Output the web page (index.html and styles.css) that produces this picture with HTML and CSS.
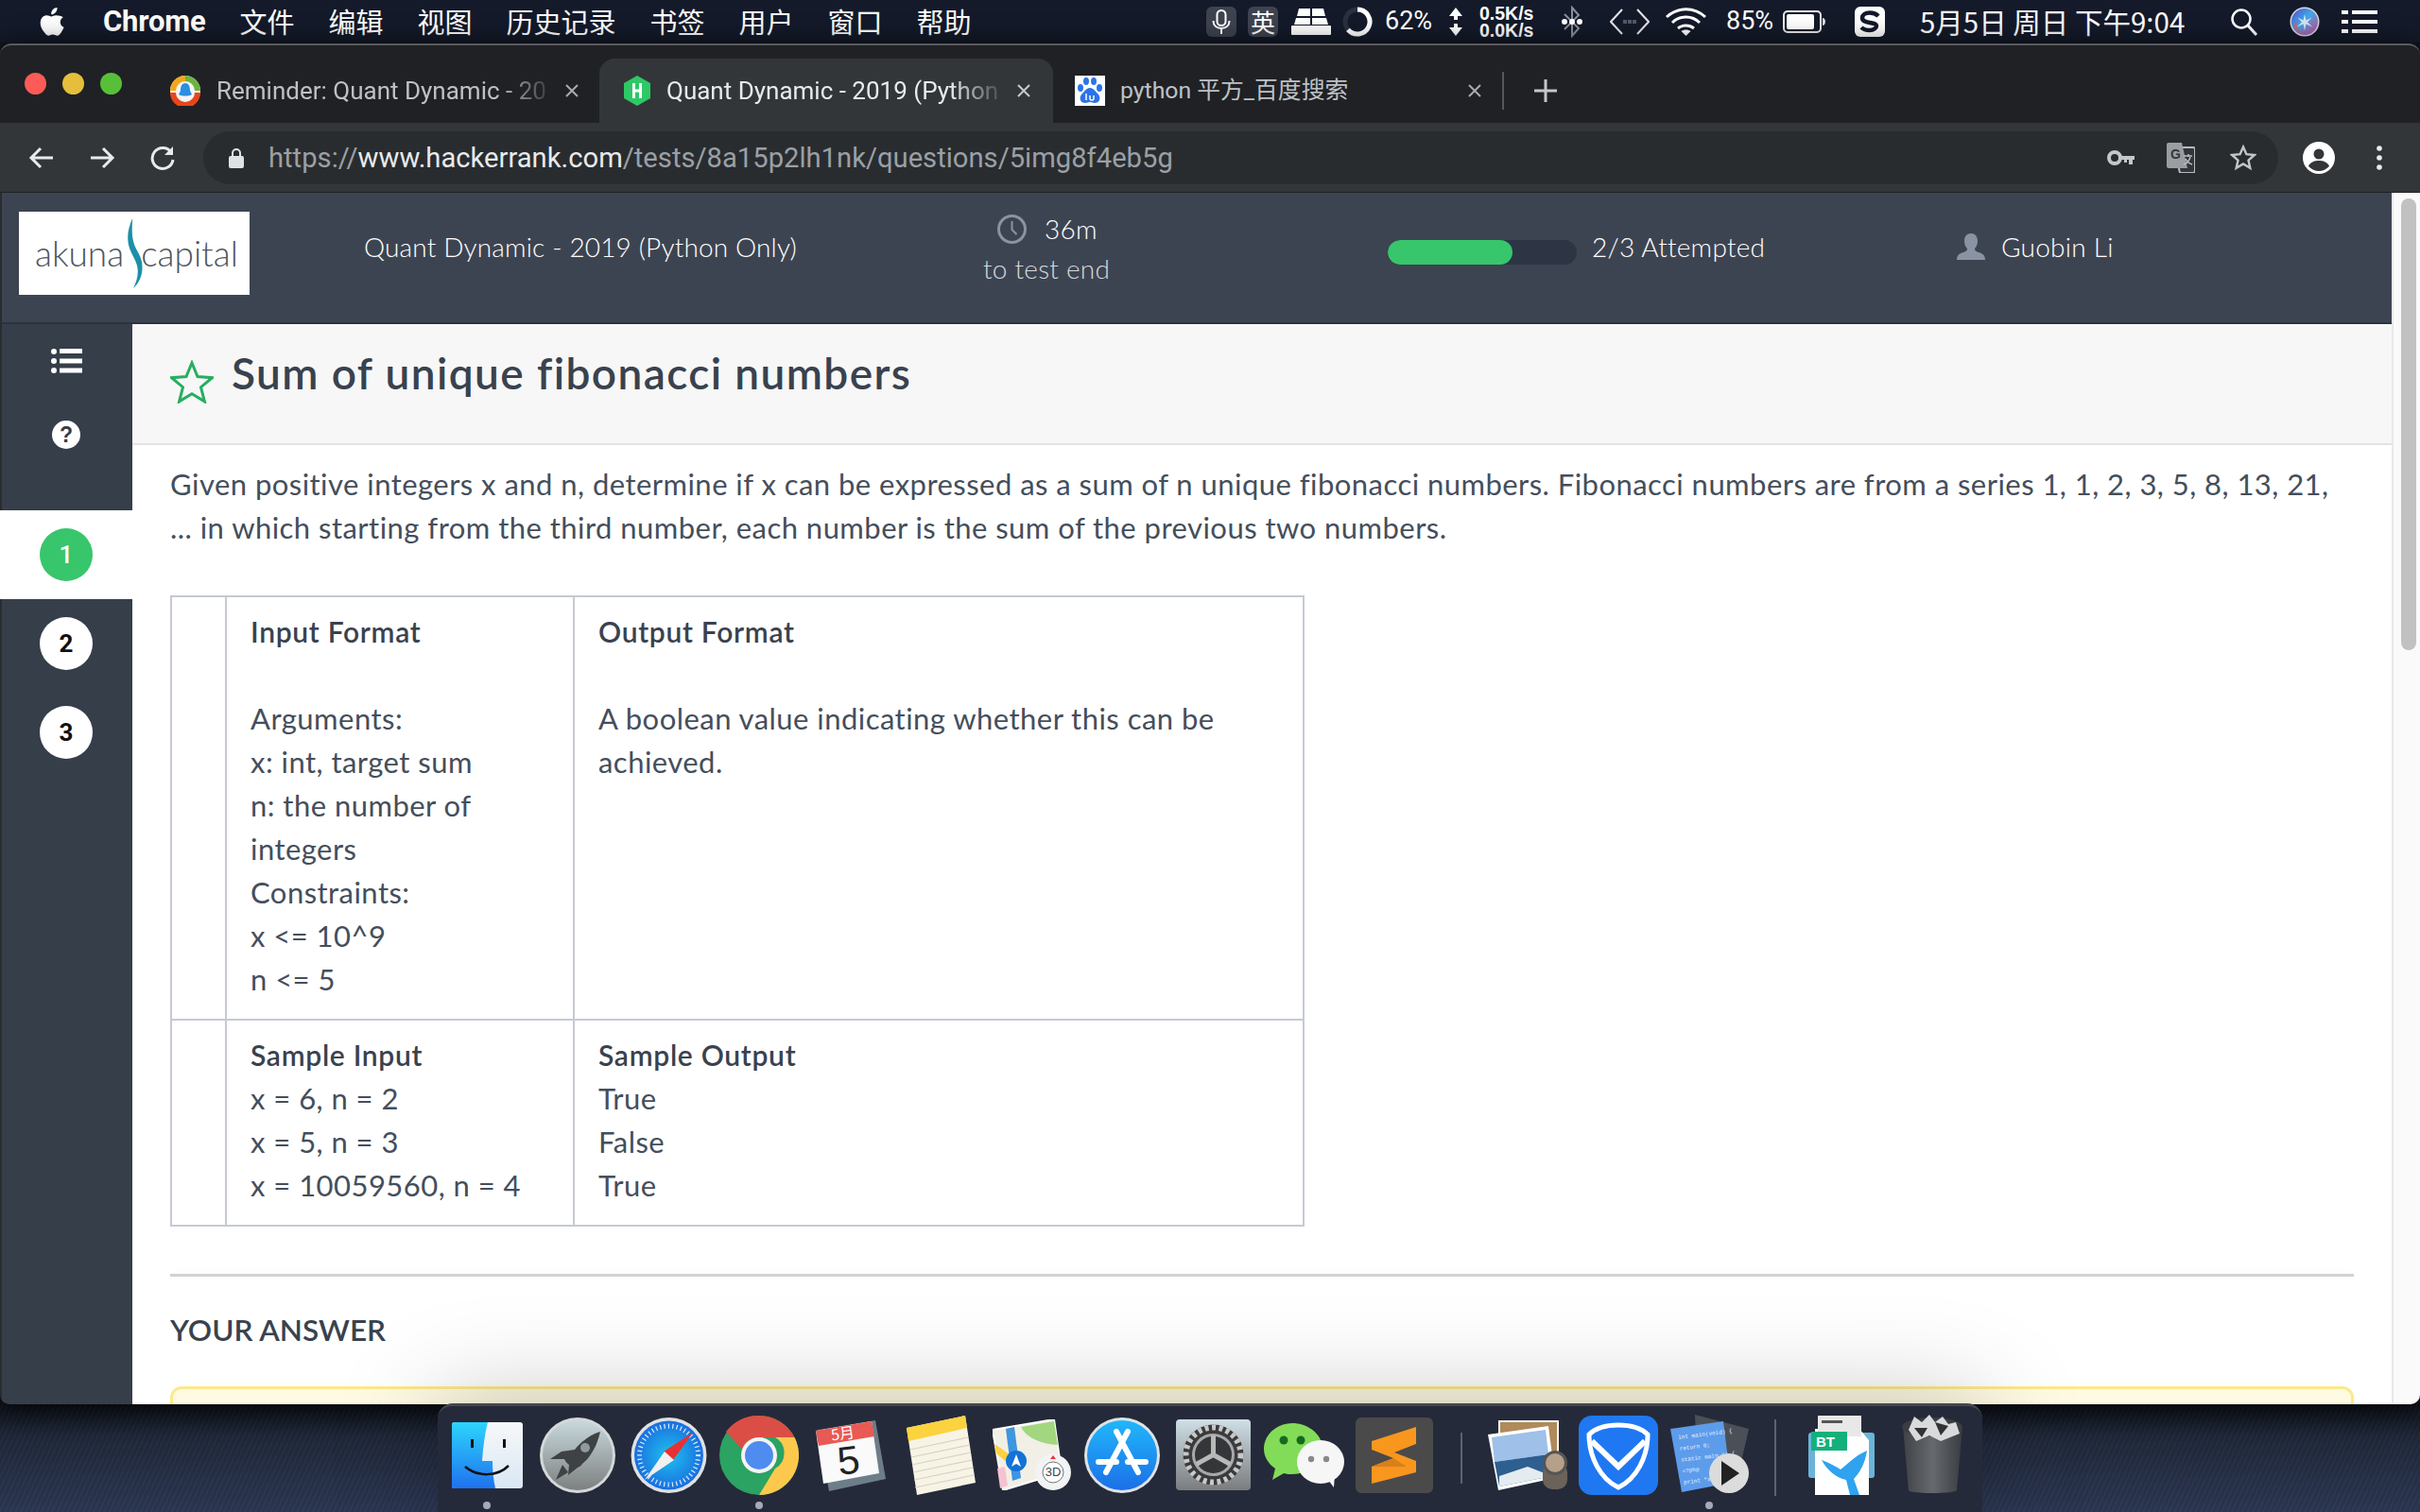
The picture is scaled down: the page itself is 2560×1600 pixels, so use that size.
FILE: index.html
```html
<!DOCTYPE html>
<html lang="en">
<head>
<meta charset="utf-8">
<title>Quant Dynamic - 2019 (Python Only)</title>
<link rel="stylesheet" href="styles.css">
</head>
<body>
<div class="desktop">
  <header class="menubar">
    <svg class="apple" viewBox="0 0 26 32"><path d="M18.5 1c.2 2.300-.7 4-1.800 5.200-1.200 1.300-2.800 2.200-4.500 2-.2-2 .7-3.900 1.800-5.100C15.200 1.800 17.100.9 18.500 1zM24.800 11.300c-2 1.300-3 3-3 5.100 0 2.500 1.400 4.300 3.800 5.300-.7 2-1.600 3.800-2.800 5.500-1.300 1.800-2.500 3.500-4.400 3.500-1.800 0-2.400-1.100-4.600-1.100-2.100 0-2.800 1.100-4.500 1.100-1.800.1-3.200-1.800-4.500-3.600C1.800 23.600 0 18.700 1 14.700c.8-3.200 3.500-5.400 6.500-5.400 1.900 0 3.600 1.200 4.800 1.200 1.100 0 3.100-1.400 5.300-1.200 2.400.1 5 .6 7.200 2z" fill="#fff"/></svg>
    <nav class="menus">
      <span class="menu-app">Chrome</span><span>文件</span><span>编辑</span><span>视图</span><span>历史记录</span><span>书签</span><span>用户</span><span>窗口</span><span>帮助</span>
    </nav>
    <div class="status">
      <span class="st-box st-mic"><svg viewBox="0 0 32 32"><rect x="11.500" y="4" width="9" height="16" rx="4.500" fill="none" stroke="#fff" stroke-width="2"/><path d="M7.500 15c0 5 3.500 8 8.500 8s8.500-3 8.500-8M16 23v6" fill="none" stroke="#fff" stroke-width="2"/></svg></span>
      <span class="st-box st-ying">英</span>
      <svg class="st-kbd" viewBox="0 0 42 28"><path d="M8 0h12v8H6zM22 0h12l2 8H22zM5 10h15v7H3zM22 10h15l2 7H22z" fill="#fff"/><rect x="0" y="18" width="42" height="10" rx="1" fill="#fff"/></svg>
      <svg class="st-ring" viewBox="0 0 32 32"><circle cx="16" cy="16" r="13" fill="none" stroke="#2b3040" stroke-width="5"/><path d="M16 3a13 13 0 1 1-10 21.300" fill="none" stroke="#fff" stroke-width="5"/></svg>
      <span class="st-txt st-62">62%</span>
      <svg class="st-arrows" viewBox="0 0 16 32"><path d="M8 1l7 9H10v4H6v-4H1zM8 31l7-9H10v-4H6v4H1z" fill="#fff"/></svg>
      <span class="st-speed">0.5K/s<br>0.0K/s</span>
      <svg class="st-bt" viewBox="0 0 22 34"><path d="M3 9l15 15-7 8V2l7 8L3 25" fill="none" stroke="#8b8f98" stroke-width="2"/><circle cx="3" cy="17" r="3" fill="#fff"/><circle cx="11" cy="17" r="3" fill="#fff"/><circle cx="19" cy="17" r="3" fill="#fff"/></svg>
      <svg class="st-code" viewBox="0 0 42 30"><path d="M13 2L1 15l12 13M29 2l12 13-12 13" fill="none" stroke="#e6e6e6" stroke-width="2"/><path d="M14 13h4v4h-4zM19 13h4v4h-4zM24 13h4v4h-4z" fill="#555a66"/></svg>
      <svg class="st-wifi" viewBox="0 0 43 32"><path d="M1 11c12-11 29-11 41 0M7 17c8-8 21-8 29 0M13 23c5-4 12-4 17 0" fill="none" stroke="#fff" stroke-width="3"/><path d="M21.500 31l-5-5c3-2 7-2 10 0z" fill="#fff"/></svg>
      <span class="st-txt st-85">85%</span>
      <svg class="st-batt" viewBox="0 0 46 24"><rect x="1" y="1" width="39" height="22" rx="4" fill="none" stroke="#e8e8e8" stroke-width="2"/><rect x="4" y="4" width="29" height="16" rx="2" fill="#fff"/><path d="M42 8c2 0 3 2 3 4s-1 4-3 4z" fill="#ddd"/></svg>
      <svg class="st-s" viewBox="0 0 32 32"><rect width="32" height="32" rx="6" fill="#fff"/><path d="M25 10c-2-2-5-3.500-9-3.500-5 0-8 2.500-8 5.500 0 3 3 4 8 5 5 1 7 1.500 7 3.500S20 25 16 25c-4 0-7-1-9-3" fill="none" stroke="#14192a" stroke-width="4.500"/></svg>
      <span class="st-date">5月5日 周日 下午9:04</span>
      <svg class="st-search" viewBox="0 0 29 30"><circle cx="12" cy="12" r="9.500" fill="none" stroke="#fff" stroke-width="2.500"/><path d="M19 19l9 10" stroke="#fff" stroke-width="3"/></svg>
      <svg class="st-siri" viewBox="0 0 32 32"><defs><linearGradient id="sir" x1="0" y1="0" x2="1" y2="1"><stop offset="0" stop-color="#5a48c8"/><stop offset=".45" stop-color="#3fa8e8"/><stop offset="1" stop-color="#e0408c"/></linearGradient></defs><circle cx="16" cy="16" r="15.500" fill="#d8d8e0"/><circle cx="16" cy="16" r="14" fill="url(#sir)"/><path d="M16 8l1.500 6.500 6-3-4.500 5 5.500 5-7-3-1.500 7-1.500-7-7 3 5.500-5-4.500-5 6 3z" fill="#fff" opacity=".75"/><path d="M4 20a13 13 0 0 0 12 10 13 13 0 0 1-8-14z" fill="#e8566a" opacity=".7"/></svg>
      <svg class="st-list" viewBox="0 0 38 28"><path d="M0 2h7v4H0zM11 2h27v4H11zM0 12h7v4H0zM11 12h27v4H11zM0 22h7v4H0zM11 22h27v4H11z" fill="#fff"/></svg>
    </div>
  </header>

  <section class="window">
    <div class="tabstrip">
      <div class="lights"><i class="l-red"></i><i class="l-yellow"></i><i class="l-green"></i></div>
      <div class="tab tab-a">
        <svg class="fav" viewBox="0 0 32 32"><circle cx="16" cy="16" r="16" fill="#f4f4f4"/><path d="M16 0a16 16 0 0 1 16 16h-6A10 10 0 0 0 16 6z" fill="#6cb33f"/><path d="M16 0A16 16 0 0 0 0 16h6A10 10 0 0 1 16 6z" fill="#f2a71b"/><path d="M0 18a16 16 0 0 0 32 0h-6a10 10 0 0 1-20 0z" fill="#e8451c"/><path d="M16 8c4 0 5 4 5 8l2 4c-4 2-10 2-14 0l2-4c0-4 1-8 5-8z" fill="#2a8fe0"/></svg>
        <span class="tab-title fade">Reminder: Quant Dynamic - 20</span>
        <svg class="tab-x" viewBox="0 0 16 16"><path d="M2 2l12 12M14 2L2 14" stroke="#a8abaf" stroke-width="2"/></svg>
      </div>
      <div class="tab tab-b active">
        <svg class="fav fav-h" viewBox="0 0 28 32"><path d="M14 0l14 8v16l-14 8-14-8V8z" fill="#2ec866"/><path d="M9 8h3v16H9zM16 8h3v16h-3zM11 14.500h6v3h-6z" fill="#fff"/></svg>
        <span class="tab-title fade">Quant Dynamic - 2019 (Python</span>
        <svg class="tab-x" viewBox="0 0 16 16"><path d="M2 2l12 12M14 2L2 14" stroke="#c8cacd" stroke-width="2"/></svg>
      </div>
      <div class="tab tab-c">
        <svg class="fav" viewBox="0 0 32 32"><rect width="32" height="32" fill="#fff"/><g fill="#2b73e8"><ellipse cx="6" cy="13" rx="3" ry="4"/><ellipse cx="12" cy="6" rx="3" ry="4"/><ellipse cx="20" cy="6" rx="3" ry="4"/><ellipse cx="26" cy="13" rx="3" ry="4"/><path d="M16 13c4 0 6 4 9 7 3 4 1 9-4 9-2 0-3-1-5-1s-3 1-5 1c-5 0-7-5-4-9 3-3 5-7 9-7z"/></g><path d="M12 19v7M20 21v3a2 2 0 0 1-4 0v-3" stroke="#fff" stroke-width="1.500" fill="none"/></svg>
        <span class="tab-title tab-title-c">python 平方_百度搜索</span>
        <svg class="tab-x" viewBox="0 0 16 16"><path d="M2 2l12 12M14 2L2 14" stroke="#a8abaf" stroke-width="2"/></svg>
      </div>
      <i class="tab-sep"></i>
      <svg class="tab-plus" viewBox="0 0 24 24"><path d="M10.500 0h3v10.500H24v3H13.500V24h-3V13.500H0v-3h10.500z" fill="#c4c6c9"/></svg>
    </div>

    <div class="toolbar">
      <svg class="tb-ico tb-back" viewBox="0 0 28 28"><path d="M26 14H4M13 4L3 14l10 10" fill="none" stroke="#e8eaed" stroke-width="3"/></svg>
      <svg class="tb-ico tb-fwd" viewBox="0 0 28 28"><path d="M2 14h22M15 4l10 10-10 10" fill="none" stroke="#e8eaed" stroke-width="3"/></svg>
      <svg class="tb-ico tb-reload" viewBox="0 0 28 28"><path d="M23 8a11 11 0 1 0 2 8" fill="none" stroke="#e8eaed" stroke-width="3"/><path d="M25 2v9h-9z" fill="#e8eaed"/></svg>
      <div class="urlbar">
        <svg class="lock" viewBox="0 0 16 22"><path d="M4 9V6a4 4 0 0 1 8 0v3" fill="none" stroke="#dfe1e5" stroke-width="2"/><rect y="9" width="16" height="13" rx="2" fill="#dfe1e5"/></svg>
        <span class="url"><span class="url-dim">https://</span><span class="url-host">www.hackerrank.com</span><span class="url-dim">/tests/8a15p2lh1nk/questions/5img8f4eb5g</span></span>
        <svg class="ub-key" viewBox="0 0 30 20"><circle cx="8" cy="10" r="6" fill="none" stroke="#c4c6c9" stroke-width="4"/><path d="M13 8h16v4h-2v5h-4v-5h-2v3h-3v-3h-5z" fill="#c4c6c9"/></svg>
        <svg class="ub-trans" viewBox="0 0 30 32"><path d="M8 5h20a2 2 0 0 1 2 2v23a2 2 0 0 1-2 2H14z" fill="#32363a" stroke="#b8babd" stroke-width="2"/><path d="M2 0h14l6 27H2a2 2 0 0 1-2-2V2a2 2 0 0 1 2-2z" fill="#9a9da1"/><text x="4" y="17" class="ub-g">G</text><path d="M18 14h9M23 12v3M25 15c-1 4-4 7-7 8M20 17c1 3 4 5 7 6" fill="none" stroke="#b8babd" stroke-width="1.500"/></svg>
        <svg class="ub-star" viewBox="0 0 28 28"><path d="M14 2.500l3.400 7.700 8.400.8-6.300 5.600 1.800 8.200L14 20.500l-7.300 4.300 1.800-8.200L2.200 11l8.400-.8z" fill="none" stroke="#c4c6c9" stroke-width="2.400"/></svg>
      </div>
      <svg class="tb-profile" viewBox="0 0 34 34"><circle cx="17" cy="17" r="17" fill="#fff"/><circle cx="17" cy="13" r="5.500" fill="#323639"/><path d="M6 26c2-5 7-6 11-6s9 1 11 6c-3 3-7 5-11 5s-8-2-11-5z" fill="#323639"/></svg>
      <svg class="tb-more" viewBox="0 0 8 28"><circle cx="4" cy="4" r="2.800" fill="#e8eaed"/><circle cx="4" cy="14" r="2.800" fill="#e8eaed"/><circle cx="4" cy="24" r="2.800" fill="#e8eaed"/></svg>
    </div>

    <div class="viewport">
      <div class="page">
        <div class="topbar">
          <div class="logo"><span class="logo-word">akuna</span><svg class="logo-swoosh" viewBox="0 0 24 74"><path d="M12 0C8 10 6 18 8 28c2 9 7 14 9 22 2 8 0 16-4 24 7-6 11-16 9-28-2-9-7-13-9-22-2-8-1-16-1-24z" fill="#1d8fa8"/></svg><span class="logo-word">capital</span></div>
          <div class="top-title">Quant Dynamic - 2019 (Python Only)</div>
          <div class="timer">
            <div class="timer-row"><svg class="clock" viewBox="0 0 31 31"><circle cx="15.500" cy="15.500" r="14" fill="none" stroke="#8a93a3" stroke-width="3"/><path d="M15.500 7v9l5 5" fill="none" stroke="#8a93a3" stroke-width="2"/></svg><span class="timer-val">36m</span></div>
            <div class="timer-sub">to test end</div>
          </div>
          <div class="progress"><div class="progress-fill" style="width:66%"></div></div>
          <div class="attempted">2/3 Attempted</div>
          <div class="user"><svg class="user-ico" viewBox="0 0 30 28"><path d="M15 0c5 0 7 4 7 8 0 3-1 6-3 8 0 2 1 3 4 4 4 1 7 3 7 8H0c0-5 3-7 7-8 3-1 4-2 4-4-2-2-3-5-3-8 0-4 2-8 7-8z" fill="#8a93a3"/></svg><span>Guobin Li</span></div>
        </div>
        <div class="body">
          <aside class="sidebar">
            <div class="side-ico"><svg class="ico-list" viewBox="0 0 34 26"><path d="M7 3a3 3 0 1 1-6 0 3 3 0 0 1 6 0zM7 13a3 3 0 1 1-6 0 3 3 0 0 1 6 0zM7 23a3 3 0 1 1-6 0 3 3 0 0 1 6 0zM10 0h24v5H10zM10 10.500h24v5H10zM10 20.500h24v5H10z" fill="#fff"/></svg></div>
            <div class="side-ico"><span class="ico-help">?</span></div>
            <div class="steps">
              <div class="step step-on"><span class="num">1</span></div>
              <div class="step"><span class="num">2</span></div>
              <div class="step"><span class="num">3</span></div>
            </div>
          </aside>
          <main class="main">
            <div class="q-head">
              <svg class="q-star" viewBox="0 0 46 46"><path d="M23 3l6 14.500 15.500 1.200-12 10 3.900 15.200L23 35.800 9.600 43.900l3.900-15.200-12-10L17 17.500z" fill="none" stroke="#27ae60" stroke-width="3"/></svg>
              <h1>Sum of unique fibonacci numbers</h1>
            </div>
            <div class="q-body">
              <p class="q-text">Given positive integers x and n, determine if x can be expressed as a sum of n unique fibonacci numbers. Fibonacci numbers are from a series 1, 1, 2, 3, 5, 8, 13, 21, ... in which starting from the third number, each number is the sum of the previous two numbers.</p>
              <table class="q-table">
                <colgroup><col class="c1"><col class="c2"><col class="c3"></colgroup>
                <tr>
                  <td></td>
                  <td><b>Input Format</b><br><br>Arguments:<br>x: int, target sum<br>n: the number of integers<br>Constraints:<br>x &lt;= 10^9<br>n &lt;= 5</td>
                  <td><b>Output Format</b><br><br>A boolean value indicating whether this can be achieved.</td>
                </tr>
                <tr>
                  <td></td>
                  <td><b>Sample Input</b><br>x = 6, n = 2<br>x = 5, n = 3<br>x = 10059560, n = 4</td>
                  <td><b>Sample Output</b><br>True<br>False<br>True</td>
                </tr>
              </table>
              <hr class="rule">
              <h2>YOUR ANSWER</h2>
              <div class="answer"></div>
            </div>
          </main>
        </div>
      </div>
      <div class="scrollbar"><i class="thumb"></i></div>
    </div>
  </section>

  <footer class="dock">
    <div class="slot running"><svg class="i-finder" viewBox="0 0 75 70"><defs><linearGradient id="fb" x1="0" y1="0" x2="0" y2="1"><stop offset="0" stop-color="#2dd4fd"/><stop offset="1" stop-color="#1e72ee"/></linearGradient><linearGradient id="fw" x1="0" y1="0" x2="0" y2="1"><stop offset="0" stop-color="#f7f8f9"/><stop offset="1" stop-color="#d9e7f5"/></linearGradient></defs><rect width="75" height="70" rx="3" fill="url(#fw)"/><path d="M3 0h35c-3 12-5 26-6 41h11c0 10 1 20 3 29H3a3 3 0 0 1-3-3V3a3 3 0 0 1 3-3z" fill="url(#fb)"/><rect x="20" y="18" width="3" height="9" fill="#111"/><rect x="54" y="18" width="3" height="9" fill="#111"/><path d="M14 47c13 11 34 11 46-1" fill="none" stroke="#111" stroke-width="2.500"/></svg></div>
    <div class="slot"><svg class="i-round" viewBox="0 0 80 80"><defs><linearGradient id="lp" x1="0" y1="0" x2="0" y2="1"><stop offset="0" stop-color="#c8d9dd"/><stop offset="1" stop-color="#7d8080"/></linearGradient></defs><circle cx="40" cy="40" r="40" fill="#d5d8d8"/><circle cx="40" cy="40" r="37" fill="url(#lp)"/><path d="M64 15C54 18 44 25 37 34l-14 2-12 8 15 0c1 2 2 4 5 6l-1 11 10-8c2-1 4-2 5-4C55 41 61 28 64 15z" fill="#3e4245"/><path d="M24 50l-7 16 13-8z" fill="#3e4245"/><circle cx="48" cy="32" r="5" fill="#8f9aa0"/></svg></div>
    <div class="slot"><svg class="i-round i-safari" viewBox="0 0 81 80"><defs><radialGradient id="sf"><stop offset="0" stop-color="#1fc1ee"/><stop offset="1" stop-color="#1a6fe0"/></radialGradient></defs><circle cx="40.500" cy="40" r="40" fill="#e0e2e4"/><circle cx="40.500" cy="40" r="36.500" fill="url(#sf)"/><circle cx="40.500" cy="40" r="31" fill="none" stroke="#fff" stroke-width="5" stroke-dasharray="1.200 3.200" opacity=".85"/><path d="M66 16L35 36l10 9z" fill="#e8312f"/><path d="M15 66l31-21-10-9z" fill="#f0f0f0"/></svg></div>
    <div class="slot running"><svg class="i-chrome" viewBox="0 0 84 84"><circle cx="42" cy="42" r="42" fill="#2aa363"/><path d="M42 0a42 42 0 0 1 37.500 23H42a19 19 0 0 0-18 13L7 17A42 42 0 0 1 42 0z" fill="#db4e45"/><path d="M79.500 23A42 42 0 0 1 42 84l17-28a19 19 0 0 0 0-33z" fill="#fcc94d"/><circle cx="42" cy="42" r="19" fill="#f4f4f4"/><circle cx="42" cy="42" r="15" fill="#4f8cf0"/></svg></div>
    <div class="slot"><svg class="i-cal" viewBox="0 0 78 78"><path d="M6 12l60-10 11 62-60 13z" fill="#6d7e88"/><path d="M3 13L62 3l8 55-59 11z" fill="#fafafa"/><path d="M3 13L62 3l3 16-59 10z" fill="#e85a54"/><text class="cal-m" x="19" y="22" transform="rotate(-8 30 15)">5月</text><text class="cal-d" x="26" y="59" transform="rotate(-7 36 45)">5</text></svg></div>
    <div class="slot"><svg class="i-notes" viewBox="0 0 73 84"><path d="M0 13L62 0l11 71-62 13z" fill="#f7f4e6"/><path d="M0 13L62 0l2 13L2 27z" fill="#fcd23f"/><path d="M4 36l61-13M5 44l62-13M6 52l62-13M7 60l62-13M8 68l62-13M9 76l62-13" stroke="#d5d3c6" stroke-width="1.200"/></svg></div>
    <div class="slot"><svg class="i-maps" viewBox="0 0 83 75"><path d="M0 11L65 0l8 56-62 19z" fill="#f2efe6" stroke="#fff" stroke-width="2"/><path d="M30 8L65 2l4 25C52 26 36 20 30 8z" fill="#a3d77f"/><path d="M14 10l9-2 7 54-9 3z" fill="#3d96e0"/><path d="M2 26l19 13-2 10L4 36z" fill="#fcd23f"/><path d="M5 52l8-2 3 20-8 3z" fill="#f5c3cf"/><circle cx="25" cy="44" r="11" fill="#1272d6"/><path d="M25 37l5 13-5-3-5 3z" fill="#fff"/><circle cx="64" cy="56" r="19" fill="#f2f3f4"/><circle cx="64" cy="56" r="11" fill="#fff" stroke="#777" stroke-width="1"/><text class="maps-3d" x="64" y="60">3D</text><path d="M64 38l3 4h-6z" fill="#e33"/></svg></div>
    <div class="slot"><svg class="i-round" viewBox="0 0 80 80"><defs><linearGradient id="ap" x1="0" y1="0" x2="0" y2="1"><stop offset="0" stop-color="#20b7fb"/><stop offset="1" stop-color="#1c6fe8"/></linearGradient></defs><circle cx="40" cy="40" r="40" fill="#dfe3e6"/><circle cx="40" cy="40" r="37" fill="url(#ap)"/><path d="M46 15L23 58M34 15l23 43M15 47h19M46 47h19" fill="none" stroke="#fff" stroke-width="6" stroke-linecap="round"/></svg></div>
    <div class="slot"><svg class="i-prefs" viewBox="0 0 79 75"><defs><linearGradient id="pf" x1="0" y1="0" x2="0" y2="1"><stop offset="0" stop-color="#cfe0e6"/><stop offset="1" stop-color="#7a7c7f"/></linearGradient></defs><rect width="79" height="75" rx="4" fill="url(#pf)"/><circle cx="39.500" cy="37.500" r="32" fill="#3a3b3d"/><circle cx="39.500" cy="37.500" r="29" fill="none" stroke="#c8c8c8" stroke-width="6" stroke-dasharray="4 3.500"/><circle cx="39.500" cy="37.500" r="21" fill="#35363a" stroke="#a8a8a8" stroke-width="3"/><path d="M39.500 37.500V17M39.500 37.500l18 10M39.500 37.500l-18 10" stroke="#b8b8b8" stroke-width="5"/></svg></div>
    <div class="slot"><svg class="i-wechat" viewBox="0 0 85 68"><path d="M30 0C14 0 0 12 0 27c0 9 5 16 12 21l-3 12 12-7c3 1 6 1 9 1 17 0 32-12 32-27S47 0 30 0z" fill="#83dc57"/><circle cx="21" cy="18" r="4.500" fill="#166a1e"/><circle cx="39" cy="18" r="4.500" fill="#166a1e"/><ellipse cx="60" cy="41" rx="25" ry="23" fill="#f6f6f6"/><path d="M68 60l6 8 1-14z" fill="#f6f6f6"/><circle cx="50" cy="38" r="3.200" fill="#888"/><circle cx="66" cy="38" r="3.200" fill="#888"/></svg></div>
    <div class="slot"><svg class="i-subl" viewBox="0 0 82 80"><rect width="82" height="80" rx="6" fill="#4a4a4a"/><path d="M64 10V28L41 37 64 46V58L17 70V52l23-9L17 34V25z" fill="#f9961e"/><path d="M17 52l23-9 14 9z" fill="#d8801a"/></svg></div>
    <div class="dock-sep dock-sep-a"><i></i></div>
    <div class="slot"><svg class="i-prev" viewBox="0 0 85 75"><rect x="11" y="1" width="64" height="60" fill="#fff"/><rect x="13" y="3" width="60" height="56" fill="#b08a5a"/><path d="M0 16L64 7l7 55-60 13z" fill="#fff"/><path d="M4 19l57-8 3 26-57 8z" fill="#9fc0e8"/><path d="M7 45l57-8 4 23-56 11z" fill="#2d5f90"/><path d="M12 60l30-10 26 10-56 11z" fill="#e4ecef"/><rect x="58" y="46" width="26" height="28" rx="10" fill="#6b625a"/><ellipse cx="71" cy="46" rx="13" ry="13" fill="#555"/><ellipse cx="71" cy="46" rx="10" ry="10" fill="#b5a08a"/></svg></div>
    <div class="slot"><svg class="i-tenc" viewBox="0 0 84 84"><rect width="84" height="84" rx="14" fill="#1f78f2"/><path d="M42 10C28 10 17 14 11 20c0 24 12 47 31 56 19-9 31-32 31-56-6-6-17-10-31-10z" fill="none" stroke="#fff" stroke-width="5"/><path d="M14 27l28 27 28-27" fill="none" stroke="#fff" stroke-width="6"/></svg></div>
    <div class="slot running"><svg class="i-script" viewBox="0 0 83 86"><path d="M26 0l57 15-14 61-40-10z" fill="#4b5058"/><path d="M0 15l56-8 8 65-52 10z" fill="#5d9ceb"/><text class="sc-t" transform="rotate(-7 8 30)" x="9" y="26">int main(void) {</text><text class="sc-t" transform="rotate(-7 8 30)" x="9" y="38">  return 0;</text><text class="sc-t" transform="rotate(-7 8 30)" x="9" y="50">static main () {</text><text class="sc-t" transform="rotate(-7 8 30)" x="9" y="62">&lt;?php</text><text class="sc-t" transform="rotate(-7 8 30)" x="9" y="74">print "x";</text><circle cx="62" cy="62" r="21" fill="#dcdcdc"/><path d="M54 49l19 13-19 13z" fill="#222"/></svg></div>
    <div class="dock-sep dock-sep-b"><i></i></div>
    <div class="slot"><svg class="i-bt" viewBox="0 0 70 84"><rect y="18" width="70" height="48" rx="3" fill="#6bb4d8"/><path d="M7 14h47l10 12v58H7z" fill="#fff"/><path d="M10 0h46v22H10z" fill="#e8e8e8"/><rect x="14" y="5" width="22" height="3" fill="#555"/><rect x="3" y="17" width="38" height="20" fill="#14b07c"/><text class="bt-t" x="8" y="33">BT</text><path d="M14 47c8 3 14 6 20 10 6-4 14-14 28-20-2 14-8 24-14 30l6 17H44l-4-16c-10-2-20-10-26-21z" fill="#2fa3f0"/></svg></div>
    <div class="slot"><svg class="i-trash" viewBox="0 0 66 85"><defs><linearGradient id="tr" x1="0" y1="0" x2="1" y2="0"><stop offset="0" stop-color="#3f4246"/><stop offset=".5" stop-color="#66696d"/><stop offset="1" stop-color="#393c40"/></linearGradient></defs><path d="M2 12l6 68c1 4 50 4 51 0l6-68z" fill="url(#tr)"/><ellipse cx="33" cy="13" rx="32" ry="10" fill="#3b3d40"/><path d="M8 16l6-14 8 6 8-8 6 8 8-6 6 8 8-2 4 12-20 8-12-6-14 6z" fill="#d8dadc"/><path d="M14 14l8 10 6-10zM36 8l6 14 8-10z" fill="#333"/></svg></div>
  </footer>
</div>
</body>
</html>
```
FILE: styles.css
```css
* { box-sizing: border-box; }
html, body { margin: 0; padding: 0; width: 2560px; height: 1600px; overflow: hidden; }
body { font-family: "Lato", "Noto Sans CJK SC", sans-serif; color: #39424e; }
svg { display: block; flex: none; }

.desktop {
  position: relative; width: 2560px; height: 1600px; overflow: hidden;
  background:
    repeating-linear-gradient(115deg, rgba(255,255,255,.018) 0 2px, rgba(0,0,0,.03) 2px 5px),
    linear-gradient(180deg, #0f131c 1486px, #1f2738 1520px, #2b3652 1600px);
}

/* menu bar */
.menubar { display: flex; align-items: center; height: 45px; background: #141a2a; color: #fff; padding-left: 42px; }
.apple { width: 26px; height: 32px; }
.menus { display: flex; gap: 36px; margin-left: 41px; font: 400 29px/45px "Noto Sans CJK SC", sans-serif; }
.menu-app { font: 700 31px/45px "Roboto", sans-serif; letter-spacing: -.2px; }
.status { display: flex; align-items: center; margin-left: auto; padding-right: 45px; }
.st-box { display: flex; align-items: center; justify-content: center; width: 32px; height: 32px; border-radius: 6px; background: #3e4350; font: 400 26px/32px "Noto Sans CJK SC", sans-serif; }
.st-box svg { width: 32px; height: 32px; }
.st-ying { margin-left: 12px; }
.st-kbd { width: 42px; height: 28px; margin-left: 14px; }
.st-ring { width: 32px; height: 32px; margin-left: 12px; }
.st-txt { font: 400 27px/45px "Roboto", sans-serif; white-space: nowrap; }
.st-62 { width: 53px; margin-left: 13px; }
.st-arrows { width: 16px; height: 32px; margin-left: 14px; }
.st-speed { width: 59px; margin-left: 17px; font: 700 19.500px/18px "Liberation Sans", sans-serif; white-space: nowrap; }
.st-bt { width: 22px; height: 34px; margin-left: 28px; }
.st-code { width: 42px; height: 30px; margin-left: 29px; }
.st-wifi { width: 43px; height: 32px; margin-left: 17px; }
.st-85 { width: 51px; margin-left: 21px; }
.st-batt { width: 46px; height: 24px; margin-left: 9px; }
.st-s { width: 32px; height: 32px; margin-left: 30px; }
.st-date { width: 280px; margin-left: 37px; font: 400 29.500px/45px "Noto Sans CJK SC", sans-serif; white-space: nowrap; }
.st-search { width: 29px; height: 30px; margin-left: 48px; }
.st-siri { width: 32px; height: 32px; margin-left: 34px; }
.st-list { width: 38px; height: 28px; margin-left: 23px; }

/* window */
.window { position: absolute; left: 0; top: 46px; width: 2560px; height: 1440px; overflow: hidden; border-radius: 12px 12px 10px 10px; background: #202124; box-shadow: 0 4px 30px rgba(0,0,0,.8); border-top: 2px solid #5a5b5e; display: flex; flex-direction: column; }
.tabstrip { display: flex; align-items: flex-end; height: 82px; flex: none; padding-left: 0; position: relative; }
.lights { display: flex; gap: 17px; align-self: flex-start; margin: 29px 0 0 26px; width: 154px; }
.lights i { width: 23px; height: 23px; border-radius: 50%; }
.l-red { background: #fc5b57; }
.l-yellow { background: #e5bf3c; }
.l-green { background: #57c038; }
.tab { display: flex; align-items: center; height: 68px; color: #bdc1c6; font: 400 26px/68px "Roboto", sans-serif; white-space: nowrap; }
.tab-a { width: 454px; padding-right: 17px; }
.tab-b { width: 480px; padding: 0 19px 0 26px; border-radius: 16px 16px 0 0; background: #323639; color: #e8eaed; }
.tab-c { width: 475px; padding: 0 17px 0 23px; }
.fav { width: 32px; height: 32px; }
.fav-h { width: 28px; }
.tab-title { margin-left: 17px; flex: 1; min-width: 0; }
.fade { -webkit-mask-image: linear-gradient(90deg, #000 0, #000 300px, transparent 360px); mask-image: linear-gradient(90deg, #000 0, #000 300px, transparent 360px); }
.tab-title-c { margin-left: 16px; font-family: "Roboto", "Noto Sans CJK SC", sans-serif; font-size: 24.800px; }
.tab-x { width: 16px; height: 16px; margin: 0 4px; }
.tab-sep { width: 2px; height: 40px; margin: 0 0 14px 0; background: #55585c; }
.tab-plus { width: 24px; height: 24px; margin: 0 0 22px 32px; }

.toolbar { display: flex; align-items: center; height: 74px; flex: none; background: #323639; border-bottom: 1px solid #1f2124; }
.tb-ico { width: 28px; height: 28px; }
.tb-back { margin-left: 30px; }
.tb-fwd { margin-left: 36px; }
.tb-reload { margin-left: 36px; }
.urlbar { display: flex; align-items: center; width: 2195px; height: 56px; margin-left: 29px; border-radius: 28px; background: #292c2f; padding-left: 27px; }
.lock { width: 16px; height: 22px; }
.url { margin-left: 26px; font: 400 29.200px/56px "Roboto", sans-serif; flex: 1; white-space: nowrap; }
.url-host { color: #e8eaed; }
.url-dim { color: #9aa0a6; }
.ub-key { width: 30px; height: 20px; }
.ub-trans { width: 30px; height: 32px; margin-left: 33px; }
.ub-g { font: 700 14px "Liberation Sans", sans-serif; fill: #32363a; }
.ub-star { width: 28px; height: 28px; margin: 0 23px 0 37px; }
.tb-profile { width: 34px; height: 34px; margin-left: 26px; }
.tb-more { width: 8px; height: 28px; margin-left: 43px; }

.viewport { display: flex; flex: 1; min-height: 0; }
.page { width: 2530px; display: flex; flex-direction: column; border-left: 2px solid #2a2c30; }
.scrollbar { width: 30px; padding: 6px 6px 0 8px; background: #fafafa; border-left: 2px solid #e8e8e8; }
.thumb { display: block; width: 16px; height: 478px; border-radius: 8px; background: #c1c1c1; }

.topbar { display: flex; align-items: flex-start; height: 139px; flex: none; background: #3d4451; border-bottom: 2px solid #2b3340; color: #fff; font-size: 28px; letter-spacing: .25px; }
.logo { display: flex; align-items: center; gap: 0; width: 244px; height: 88px; margin: 20px 0 0 18px; padding-left: 17px; background: #fff; flex: none; letter-spacing: 0; }
.logo-word { font-size: 37px; line-height: 88px; color: #4f555c; font-weight: 300; }
.logo-swoosh { width: 24px; height: 74px; margin: 0 -3px; }
.top-title { width: 655px; margin: 35px 0 0 121px; line-height: 44px; letter-spacing: .15px; white-space: nowrap; font-weight: 300; }
.timer { width: 134px; margin-top: 23px; flex: none; }
.timer-row { display: flex; align-items: center; gap: 19px; margin-left: 15px; height: 31px; }
.clock { width: 31px; height: 31px; }
.timer-val { line-height: 31px; font-weight: 300; }
.timer-sub { margin-top: 7px; line-height: 38px; color: #d8dadd; white-space: nowrap; font-weight: 300; }
.progress { width: 200px; height: 26px; margin: 50px 0 0 294px; border-radius: 13px; background: #2d3544; overflow: hidden; }
.progress-fill { height: 100%; border-radius: 13px; background: #37c66b; }
.attempted { width: 386px; margin: 35px 0 0 16px; line-height: 44px; white-space: nowrap; font-weight: 300; }
.user { display: flex; align-items: center; gap: 17px; margin-top: 35px; height: 44px; font-weight: 300; }
.user-ico { width: 30px; height: 28px; }

.body { display: flex; flex: 1; min-height: 0; }
.sidebar { width: 138px; flex: none; background: #363e4a; }
.side-ico { display: flex; align-items: center; justify-content: center; height: 78px; padding-right: 2px; }
.ico-list { width: 34px; height: 26px; }
.ico-help { width: 30px; height: 30px; border-radius: 50%; background: #fff; color: #363e4a; text-align: center; font: 700 23px/30px "Liberation Sans", sans-serif; }
.steps { margin-top: 41px; }
.step { display: flex; align-items: center; justify-content: center; height: 94px; padding-right: 2px; }
.step-on { background: #fff; margin-left: -2px; padding-right: 0; }
.num { width: 56px; height: 56px; border-radius: 50%; background: #fff; color: #111; text-align: center; font: 700 26px/56px "Roboto", sans-serif; }
.step-on .num { background: #37c66b; color: #fff; font-weight: 500; }

.main { flex: 1; min-width: 0; background: #fff; overflow: hidden; }
.q-head { position: relative; height: 128px; padding: 22px 40px 0; background: #f7f7f7; border-bottom: 2px solid #e2e2e2; display: flex; align-items: flex-start; gap: 19px; }
.q-star { width: 46px; height: 46px; margin-top: 16px; }
h1 { margin: 0; font-size: 46px; line-height: 60px; font-weight: 600; letter-spacing: 1.4px; font-variant-ligatures: none; white-space: nowrap; color: #39424e; }
.q-body { padding: 18px 40px 0; }
.q-text { margin: 0; font-size: 31px; line-height: 46px; font-weight: 400; letter-spacing: .46px; color: #454e5b; font-variant-ligatures: none; }
.q-table { width: 1200px; margin-top: 49px; border-collapse: collapse; table-layout: fixed; font-size: 31px; line-height: 46px; font-weight: 400; letter-spacing: .46px; color: #454e5b; font-variant-ligatures: none; }
.q-table td { border: 2px solid #c5cad3; padding: 13px 25px 19px; vertical-align: top; }
.q-table b { font-weight: 600; font-size: 30px; letter-spacing: .7px; color: #39424e; }
.c1 { width: 58px; }
.c2 { width: 368px; }
.rule { height: 3px; margin: 50px 0 0; border: 0; background: #d2d2d2; box-shadow: 0 0 8px rgba(0,0,0,.05); }
h2 { margin: 33px 0 0; font-size: 31.500px; line-height: 46px; font-weight: 600; white-space: nowrap; }
.answer { height: 60px; margin-top: 37px; border: 3px solid #fde98a; border-radius: 12px; background: #fffae2; }

/* dock */
.dock { position: absolute; left: 463px; top: 1485px; display: flex; align-items: flex-start; width: 1634px; height: 115px; padding-left: 4px; border-radius: 16px 16px 0 0; background: #252a3a; border-top: 3px solid #45484f; box-shadow: 0 0 110px rgba(0,0,0,.25); }
.slot { position: relative; display: flex; align-items: center; justify-content: center; flex: none; width: 96px; height: 103px; }
.running::after { content: ""; position: absolute; left: 44px; top: 101px; width: 8px; height: 8px; border-radius: 50%; background: #a6a9b8; }
.dock-sep { display: flex; justify-content: center; flex: none; }
.dock-sep i { display: block; width: 2px; background: #5d6270; }
.dock-sep-a { width: 45px; padding-top: 28px; }
.dock-sep-a i { height: 54px; }
.dock-sep-b { width: 44px; padding-top: 14px; }
.dock-sep-b i { height: 81px; }
.i-finder { width: 75px; height: 70px; }
.i-round { width: 80px; height: 80px; }
.i-safari { width: 81px; }
.i-chrome { width: 84px; height: 84px; }
.i-cal { width: 78px; height: 78px; }
.cal-m { font: 400 16px "Noto Sans CJK SC", sans-serif; fill: #fff; }
.cal-d { font: 400 42px "Liberation Sans", sans-serif; fill: #222; }
.i-notes { width: 73px; height: 84px; }
.i-maps { width: 83px; height: 75px; }
.maps-3d { font: 400 13px "Liberation Sans", sans-serif; fill: #444; text-anchor: middle; }
.i-prefs { width: 79px; height: 75px; }
.i-wechat { width: 85px; height: 68px; }
.i-subl { width: 82px; height: 80px; }
.i-prev { width: 85px; height: 75px; }
.i-tenc { width: 84px; height: 84px; }
.i-script { width: 83px; height: 86px; }
.sc-t { font: 400 6px "Liberation Mono", monospace; fill: #eaf2ff; }
.i-bt { width: 70px; height: 84px; }
.bt-t { font: 700 15px "Liberation Sans", sans-serif; fill: #fff; }
.i-trash { width: 66px; height: 85px; }
```
